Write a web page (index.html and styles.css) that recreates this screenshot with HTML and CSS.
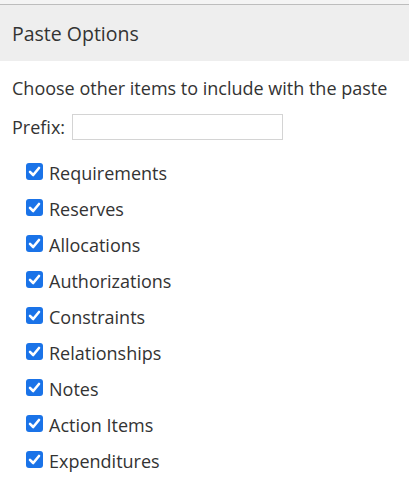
FILE: index.html
```html
<!DOCTYPE html>
<html>
<head>
<meta charset="utf-8">
<link rel="stylesheet" href="styles.css">
</head>
<body>
<div class="panel">
  <div class="header">Paste Options</div>
  <div class="content">
    <p class="intro">Choose other items to include with the paste</p>
    <div class="prefix-row">
      <label class="prefix-label" for="prefix">Prefix:</label>
      <input class="prefix-input" id="prefix" type="text">
    </div>
    <ul class="options">
      <li class="option"><span class="box"><svg viewBox="0 0 17 17"><path d="M4 8.8 L7.2 12 L13 5" /></svg></span>Requirements</li>
      <li class="option"><span class="box"><svg viewBox="0 0 17 17"><path d="M4 8.8 L7.2 12 L13 5" /></svg></span>Reserves</li>
      <li class="option"><span class="box"><svg viewBox="0 0 17 17"><path d="M4 8.8 L7.2 12 L13 5" /></svg></span>Allocations</li>
      <li class="option"><span class="box"><svg viewBox="0 0 17 17"><path d="M4 8.8 L7.2 12 L13 5" /></svg></span>Authorizations</li>
      <li class="option"><span class="box"><svg viewBox="0 0 17 17"><path d="M4 8.8 L7.2 12 L13 5" /></svg></span>Constraints</li>
      <li class="option"><span class="box"><svg viewBox="0 0 17 17"><path d="M4 8.8 L7.2 12 L13 5" /></svg></span>Relationships</li>
      <li class="option"><span class="box"><svg viewBox="0 0 17 17"><path d="M4 8.8 L7.2 12 L13 5" /></svg></span>Notes</li>
      <li class="option"><span class="box"><svg viewBox="0 0 17 17"><path d="M4 8.8 L7.2 12 L13 5" /></svg></span>Action Items</li>
      <li class="option"><span class="box"><svg viewBox="0 0 17 17"><path d="M4 8.8 L7.2 12 L13 5" /></svg></span>Expenditures</li>
    </ul>
  </div>
</div>
</body>
</html>
```
FILE: styles.css
```css
html, body {
  margin: 0;
  padding: 0;
  background: #ffffff;
}
body {
  font-family: "Open Sans", "Liberation Sans", sans-serif;
  color: #333333;
}
.panel {
  padding-top: 4px;
  background: #f4f4f4;
}
.header {
  background: #eeeeee;
  border-top: 1px solid #bdbdbd;
  height: 57px;
  box-sizing: border-box;
  padding: 0 12px;
  display: flex;
  align-items: center;
  font-size: 19.5px;
  color: #333;
}
.content {
  background: #ffffff;
  padding: 15px 12px 0 12px;
}
.intro {
  margin: 0;
  font-size: 18px;
  line-height: 24px;
}
.prefix-row {
  display: flex;
  align-items: center;
  margin-top: 14px;
  height: 26px;
  gap: 7px;
}
.prefix-label {
  font-size: 18px;
}
.prefix-input {
  width: 211px;
  height: 26px;
  box-sizing: border-box;
  border: 1px solid #d4d4d4;
  border-radius: 0;
  margin: 0;
  padding: 2px 4px;
}
.options {
  list-style: none;
  margin: 15px 0 0 0;
  padding: 0 0 0 14px;
}
.option {
  display: flex;
  align-items: center;
  height: 36px;
  font-size: 18px;
}
.box {
  width: 17px;
  height: 17px;
  border-radius: 3px;
  background: #1a73e8;
  margin-right: 6px;
  display: flex;
  align-items: center;
  justify-content: center;
  position: relative;
  top: -2px;
}
.box svg {
  width: 17px;
  height: 17px;
}
.box path {
  fill: none;
  stroke: #ffffff;
  stroke-width: 2.6;
  stroke-linecap: round;
  stroke-linejoin: round;
}
```
